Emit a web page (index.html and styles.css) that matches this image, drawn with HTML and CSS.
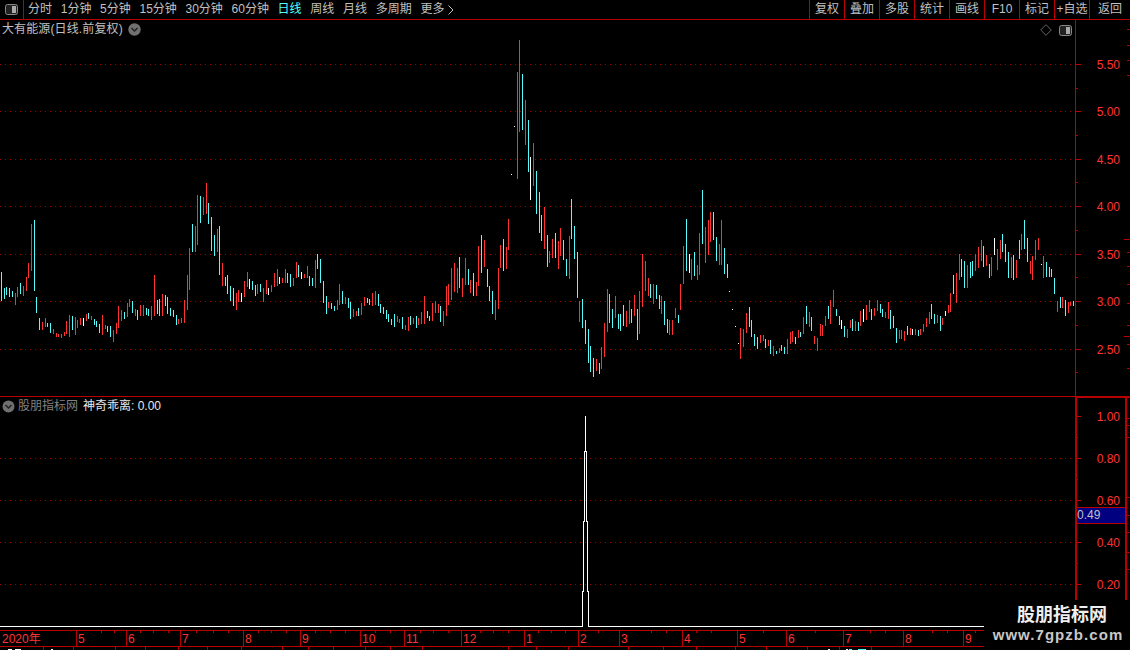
FILE: index.html
```html
<!DOCTYPE html>
<html lang="zh">
<head>
<meta charset="utf-8">
<title>大有能源</title>
<link rel="stylesheet" href="styles.css">
</head>
<body>
<div class="app">
  <header class="toolbar">
    <div class="tool-icon">
      <svg class="toggle" width="13" height="11" viewBox="0 0 13 11"><rect x=".5" y=".5" width="12" height="10" rx="2" fill="#222" stroke="#888"/><rect x="7" y="2" width="4" height="7" fill="#aaa"/></svg>
    </div>
    <nav class="periods">
      <span>分时</span><span>1分钟</span><span>5分钟</span><span>15分钟</span><span>30分钟</span><span>60分钟</span><span class="active">日线</span><span>周线</span><span>月线</span><span>多周期</span><span class="more">更多<svg width="6" height="10" viewBox="0 0 6 10"><path d="M.5 .5L5 5 .5 9.500" fill="none" stroke="#c0c0c0"/></svg></span>
    </nav>
    <nav class="actions">
      <span>复权</span><span>叠加</span><span>多股</span><span>统计</span><span>画线</span><span>F10</span><span>标记</span><span>+自选</span><span>返回</span>
    </nav>
  </header>

  <section class="panel price">
    <svg class="chart" width="1130" height="376" viewBox="0 20 1130 376">
      <path class="grid" d="M0 64.5H1075M0 111.5H1075M0 159.5H1075M0 206.5H1075M0 254.5H1075M0 301.5H1075M0 349.5H1075"/>
      <g transform="translate(.17 200) scale(.33333)">
        <path class="up" d="M46 279V315M52 261V291M70 258V288M79 231V273M85 189V234M94 72V213M127 366V390M136 354V381M160 387V402M169 399V411M175 402V411M184 402V414M193 396V408M199 363V402M208 345V411M226 351V405M232 360V384M241 354V375M259 342V363M274 348V360M307 345V405M316 375V387M340 390V426M349 369V402M355 318V384M364 330V363M382 309V351M388 297V321M406 327V348M421 315V348M430 315V348M454 318V360M463 225V348M487 282V348M535 357V372M544 354V369M553 300V369M562 225V330M568 144V270M586 78V156M592 -15V135M610 -9V45M619 -51V42M652 87V156M667 189V258M709 279V330M715 270V306M733 243V291M742 216V261M772 252V282M790 264V306M799 240V282M814 255V276M823 219V261M832 207V258M847 234V249M856 207V249M880 234V258M889 186V234M913 222V234M922 198V234M946 180V264M985 306V324M1012 300V330M1018 252V315M1036 291V312M1060 327V351M1069 333V348M1084 309V345M1093 291V318M1117 279V318M1126 273V315"/>
        <path class="down" d="M4 216V303M13 264V298M19 261V285M28 264V291M37 273V291M61 249V282M103 60V273M109 291V339M118 354V390M142 369V381M151 369V399M217 348V390M265 339V357M283 357V375M289 363V381M298 372V399M322 378V396M331 378V411M373 336V357M397 303V339M412 330V360M439 324V345M445 327V348M472 300V342M478 297V348M496 285V318M502 291V342M511 324V348M520 330V351M529 345V375M577 72V156M601 -12V69M625 9V72M634 51V153M643 105V168M658 78V225M676 231V258M682 225V282M691 258V303M700 264V318M757 243V270M766 255V288M781 252V276M862 219V249M871 222V261M895 195V231M928 228V258M937 234V258M952 162V207M961 177V249M970 243V309M979 288V342M994 309V327M1003 318V333M1027 273V312M1045 294V324M1051 306V357M1075 324V348M1102 294V309M1108 297V315M1135 282V318"/>
        <path class="flat" d="M250 354V378M724 279V306M748 237V267M805 264V285M838 231V252M904 216V237"/>
      </g>
      <g transform="translate(380.17 210) scale(.33333)">
        <path class="up" d="M52 318V336M58 327V339M76 345V360M85 321V363M100 324V342M115 324V345M124 306V342M133 258V342M157 279V333M166 273V309M175 282V309M190 303V348M199 228V318M205 222V285M214 174V270M223 159V246M232 174V249M247 204V261M256 144V225M271 210V249M289 216V258M295 108V228M313 90V171M346 270V330M355 174V297M361 105V174M379 111V177M385 27V120M412 -414V-93M418 -510V-234M436 -330V-195M460 -201V-72M493 -9V117M508 123V159M517 87V144M535 93V177M541 54V138M568 78V207M598 273V336M649 447V483M664 411V477M673 339V441M682 237V366M706 258V324M739 303V351M748 270V342M763 255V318M778 243V372M787 132V291M796 153V243M805 204V258M820 222V282M844 258V312M868 330V375M877 330V375M886 294V324M901 222V300M910 108V222M934 147V210M952 165V210M958 69V195M976 51V159M985 30V135M991 6V96M1018 102V165M1024 30V165M1081 354V447M1090 357V411M1099 309V369"/>
        <path class="down" d="M1 282V309M10 291V312M19 300V327M25 312V336M34 327V345M43 312V351M67 321V357M91 318V345M109 318V354M142 303V324M148 318V333M181 288V336M238 141V234M265 177V225M280 189V258M304 75V189M322 177V231M328 228V273M337 243V312M370 87V183M427 -408V-240M445 -270V-114M469 -117V12M478 -54V69M484 15V93M502 75V171M526 69V144M550 90V150M559 147V198M574 -33V87M583 48V147M592 126V264M607 267V354M616 330V402M625 357V459M631 408V486M640 444V501M658 459V492M688 252V339M697 297V354M715 312V357M721 312V363M730 285V348M754 297V339M772 297V390M811 222V264M829 225V267M838 255V297M853 273V345M862 327V369M895 315V339M919 27V183M943 126V198M967 -60V102M1000 6V90M1009 81V153M1033 114V192M1042 162V204M1108 291V351M1114 330V381M1123 372V408M1132 381V417"/>
        <path class="flat" d="M451 -159V-30M928 132V189M1048 243V246M1057 297V300M1066 348V351M1075 399V402M403 -252V-249M394 -108V-105"/>
      </g>
      <g transform="translate(740.17 210) scale(.33333)">
        <path class="up" d="M61 375V399M70 375V393M85 390V408M100 408V438M118 414V429M142 387V432M151 366V402M157 363V396M175 360V384M190 321V372M208 306V351M223 378V402M232 384V423M241 342V378M247 345V378M256 318V348M271 270V342M280 240V291M322 357V384M331 330V354M346 333V363M361 303V348M379 285V330M388 270V306M403 294V318M412 270V303M436 306V324M445 276V327M478 360V387M484 360V387M493 363V393M511 354V375M526 357V375M541 357V375M550 342V366M559 324V351M568 306V342M592 315V339M607 324V345M625 285V309M631 249V306M649 189V279M658 132V210M682 165V234M706 132V183M715 111V174M724 90V153M739 135V168M754 141V198M772 117V180M781 90V147M814 141V204M829 150V204M844 72V120M871 153V192M877 138V210M886 90V150M895 84V120M910 138V204M952 273V306M967 261V294M985 276V309M991 276V288"/>
        <path class="down" d="M76 387V414M91 390V432M109 423V432M124 405V423M133 411V432M166 381V402M181 366V381M199 288V342M214 321V363M265 288V327M289 297V318M298 318V345M313 348V381M337 327V363M355 336V363M394 297V330M421 282V309M427 297V321M451 300V357M460 318V354M469 354V399M502 348V375M535 360V378M574 282V327M583 312V342M601 318V363M640 195V252M664 147V201M673 153V234M691 156V204M697 153V198M730 108V171M748 162V204M787 72V126M796 102V156M805 126V204M820 135V210M838 90V147M853 30V117M862 84V156M919 156V201M928 171V201M934 177V201M943 204V252M961 261V294M976 270V318M1000 273V288"/>
        <path class="flat" d="M304 330V357M370 297V336M517 357V375M616 303V318M763 84V135M904 162V165"/>
      </g>
      <path class="axis" d="M1075.5 20V396"/>
      <path class="tick" d="M1075 64.5H1081M1075 88.5H1078M1075 111.5H1081M1075 135.5H1078M1075 159.5H1081M1075 182.5H1078M1075 206.5H1081M1075 230.5H1078M1075 254.5H1081M1075 277.5H1078M1075 301.5H1081M1075 325.5H1078M1075 349.5H1081M1075 372.5H1078M1127 29.5H1130M1127 45.5H1130M1127 60.5H1130M1127 75.5H1130M1124 239.5H1130M1127 252.5H1130M1127 266.5H1130M1127 284.5H1130M1127 303.5H1130M1127 325.5H1130M1124 336.5H1130M1127 344.5H1130M1127 368.5H1130"/>
      <g class="scale">
        <text x="1120" y="69">5.50</text>
        <text x="1120" y="116">5.00</text>
        <text x="1120" y="164">4.50</text>
        <text x="1120" y="211">4.00</text>
        <text x="1120" y="259">3.50</text>
        <text x="1120" y="306">3.00</text>
        <text x="1120" y="354">2.50</text>
      </g>
    </svg>
    <div class="title">
      <span class="stock">大有能源(日线.前复权)</span>
      <svg width="13" height="13" viewBox="0 0 13 13"><circle cx="6.5" cy="6.5" r="6.200" fill="#707070"/><path d="M3.5 5l3 3 3-3" fill="none" stroke="#222" stroke-width="1.5"/></svg>
    </div>
    <div class="corner">
      <svg width="12" height="12" viewBox="0 0 12 12"><path d="M6 .7L11.300 6 6 11.300 .7 6z" fill="none" stroke="#666"/></svg>
      <svg width="13" height="11" viewBox="0 0 13 11"><rect x=".5" y=".5" width="12" height="10" rx="2" fill="#222" stroke="#888"/><rect x="7" y="2" width="4" height="7" fill="#aaa"/></svg>
    </div>
  </section>

  <section class="panel indicator">
    <svg class="chart" width="1130" height="234" viewBox="0 396 1130 234">
      <path class="grid" d="M0 458.500H1075M0 500.500H1075M0 542.500H1075M0 584.500H1075"/>
      <path class="spike" d="M0 626.500H582.500V591.500H583.500V521.500H584.500V451.500H585.500V416V451.500H586.500V521.500H587.500V591.500H588.500V626.500H984"/>
      <path class="axis wide" d="M1076 396V630M1126 396V630"/>
      <path class="axis" d="M1075 397.500H1130"/>
      <path class="tick" d="M1075 416.500H1081M1075 437.500H1078M1075 458.500H1081M1075 479.500H1078M1075 500.500H1081M1075 521.500H1078M1075 542.500H1081M1075 563.500H1078M1075 584.500H1081M1126 418.500H1130M1127 425.500H1130M1126 437.500H1130M1127 497.500H1130M1127 515.500H1130M1127 532.500H1130M1127 552.500H1130M1127 569.500H1130"/>
      <g class="scale">
        <text x="1120" y="421">1.00</text>
        <text x="1120" y="463">0.80</text>
        <text x="1120" y="505">0.60</text>
        <text x="1120" y="547">0.40</text>
        <text x="1120" y="589">0.20</text>
      </g>
    </svg>
    <div class="title">
      <svg width="13" height="13" viewBox="0 0 13 13"><circle cx="6.5" cy="6.5" r="6" fill="#707070"/><path d="M3.500 5l3 3 3-3" fill="none" stroke="#222" stroke-width="1.500"/></svg>
      <span class="site">股朋指标网</span>
      <span class="formula">神奇乖离: 0.00</span>
    </div>
    <div class="cursor-value">0.49</div>
  </section>

  <svg class="timeline" width="1130" height="20" viewBox="0 630 1130 20">
    <path class="axis" d="M0 630.500H984M0 646.500H984"/>
    <path class="tick" d="M76.500 630V646M126.500 630V646M180.500 630V646M243.500 630V646M300.500 630V646M360.500 630V646M404.500 630V646M461.500 630V646M524.500 630V646M578.500 630V646M619.500 630V646M682.500 630V646M737.500 630V646M786.500 630V646M843.500 630V646M903.500 630V646M963.500 630V646"/>
    <path class="tick" d="M101.500 631V633M114.500 631V633M140.500 631V633M153.500 631V633M168.500 631V633M196.500 631V633M213.500 631V633M228.500 631V633M258.500 631V633M271.500 631V633M286.500 631V633M315.500 631V633M330.500 631V633M345.500 631V633M375.500 631V633M390.500 631V633M420.500 631V633M433.500 631V633M448.500 631V633M480.500 631V633M493.500 631V633M508.500 631V633M538.500 631V633M551.500 631V633M565.500 631V633M598.500 631V633M651.500 631V633M666.500 631V633M696.500 631V633M711.500 631V633M763.500 631V633M815.500 631V633M870.500 631V633M885.500 631V633M932.500 631V633M947.500 631V633M975.500 631V633"/>
    <path class="tick" d="M43.500 647V650M73.500 647V650M115.500 647V650M145.500 647V650M178.500 647V650M207.500 647V650M241.500 647V650M282.500 647V650M308.500 647V650M333.500 647V650M365.500 647V650M390.500 647V650M422.500 647V650M508.500 647V650M536.500 647V650M568.500 647V650M628.500 647V650M663.500 647V650M696.500 647V650M735.500 647V650M766.500 647V650M807.500 647V650M839.500 647V650M871.500 647V650"/>
    <path class="flat" d="M8 649.500H12M15 649.500H21M51 649.500H53M828 649.500H830M846 649.500H848"/>
    <path class="down" d="M849 649.500H852M858 649.500H866"/>
    <g class="months">
      <text x="2" y="643">2020年</text>
      <text x="78" y="643">5</text>
      <text x="128" y="643">6</text>
      <text x="182" y="643">7</text>
      <text x="245" y="643">8</text>
      <text x="302" y="643">9</text>
      <text x="362" y="643">10</text>
      <text x="406" y="643">11</text>
      <text x="463" y="643">12</text>
      <text x="526" y="643">1</text>
      <text x="580" y="643">2</text>
      <text x="621" y="643">3</text>
      <text x="684" y="643">4</text>
      <text x="739" y="643">5</text>
      <text x="788" y="643">6</text>
      <text x="845" y="643">7</text>
      <text x="905" y="643">8</text>
      <text x="965" y="643">9</text>
    </g>
  </svg>

  <div class="watermark">
    <strong>股朋指标网</strong>
    <span>www.7gpzb.com</span>
  </div>
</div>
</body>
</html>
```
FILE: styles.css
```css
* { box-sizing: border-box; }
html, body { margin: 0; padding: 0; background: #000; overflow: hidden; }
body { font-family: "Liberation Sans", "Noto Sans CJK SC", sans-serif; font-size: 12px; color: #c0c0c0; }
svg { display: block; }
.app { position: relative; width: 1130px; height: 650px; overflow: hidden; display: flex; flex-direction: column; }

.toolbar { display: flex; height: 20px; border-bottom: 1px solid #b80000; align-items: stretch; flex: none; }
.tool-icon { width: 24px; border-right: 1px solid #b80000; padding: 4px 0 0 5px; flex: none; }
.periods { display: flex; gap: 8.7px; padding-left: 4px; line-height: 19px; flex: 1; }
.periods .active { color: #55ffff; }
.more { display: flex; align-items: center; gap: 4px; }
.actions { display: flex; }
.actions span { width: 35px; border-left: 1px solid #b80000; text-align: center; line-height: 19px; white-space: nowrap; }
.actions span:last-child { width: 41px; }

.panel { position: relative; flex: none; }
.price { height: 376px; }
.indicator { height: 234px; border-top: 1px solid #b80000; }
.indicator .chart { margin-top: -1px; }

.grid { stroke: #9c0000; stroke-width: 1; stroke-dasharray: 1 4; fill: none; }
.axis, .tick { stroke: #b80000; fill: none; shape-rendering: crispEdges; }
.axis.wide { stroke-width: 2; }
.up, .down, .flat { fill: none; stroke-width: 3; shape-rendering: crispEdges; }
.timeline .up, .timeline .down, .timeline .flat { stroke-width: 1; }
.up { stroke: #ff3232; }
.down { stroke: #54fcfc; }
.flat { stroke: #ffffff; }
.spike { fill: none; stroke: #fff; stroke-width: 1; shape-rendering: crispEdges; }
.scale text { fill: #ff3232; font-size: 12px; text-anchor: end; }
.months text { fill: #ff3232; font-size: 12px; }
.timeline { flex: none; }

.title { position: absolute; left: 2px; top: 1px; display: flex; align-items: center; gap: 5px; line-height: 16px; }
.stock { letter-spacing: .12px; }
.indicator .title { top: 1px; gap: 3px; }
.site { color: #808080; }
.formula { color: #e8e8e8; margin-left: 2px; }
.corner { position: absolute; right: 58px; top: 4px; display: flex; align-items: center; gap: 7px; }
.cursor-value { position: absolute; left: 1077px; top: 110px; width: 48px; height: 17px; background: #000080; border-top: 1px solid #b80000; border-bottom: 1px solid #b80000; color: #c0c0c0; line-height: 15px; }

.watermark { position: absolute; left: 984px; top: 600px; width: 146px; height: 50px; background: #000; display: flex; flex-direction: column; align-items: center; padding-top: 5px; }
.watermark strong { font-size: 18px; line-height: 21px; font-weight: 700; color: #eee; padding-left: 10px; }
.watermark span { font-size: 15px; line-height: 17px; font-weight: 700; letter-spacing: 1.05px; color: #c8c8c8; padding-left: 2px; }
```
